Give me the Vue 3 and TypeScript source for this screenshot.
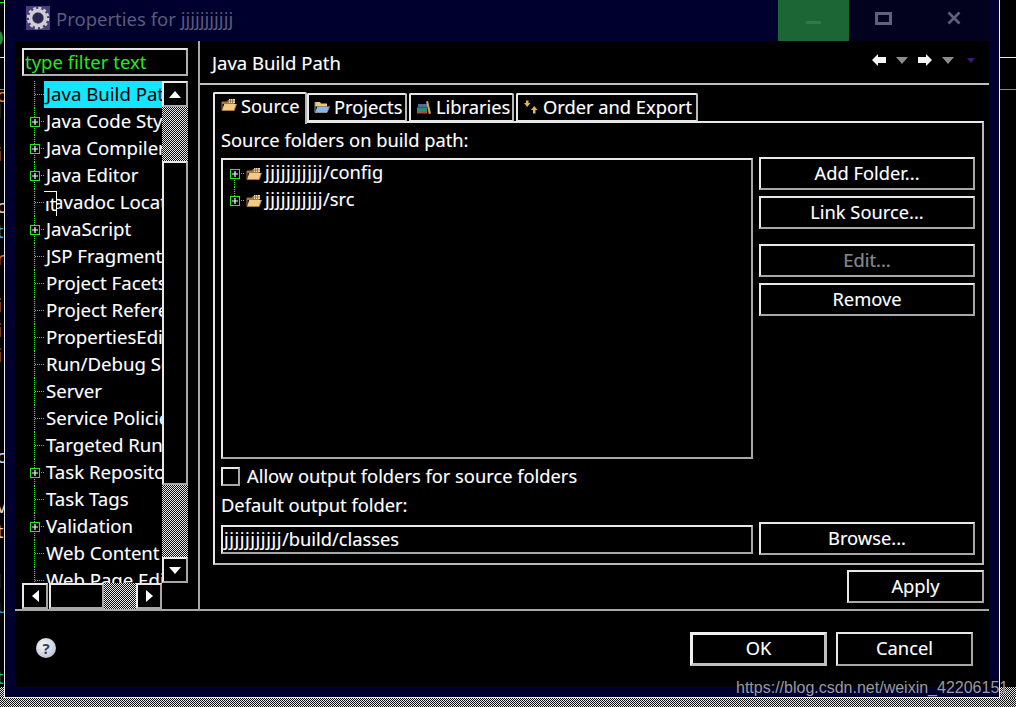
<script setup lang="ts">
interface TreeRow { label: string; plus: boolean; sel?: boolean; covered?: boolean }
const rows: TreeRow[] = [
  { label: 'Java Build Path', plus: false, sel: true },
  { label: 'Java Code Style', plus: true },
  { label: 'Java Compiler', plus: true },
  { label: 'Java Editor', plus: true },
  { label: 'Javadoc Location', plus: false, covered: true },
  { label: 'JavaScript', plus: true },
  { label: 'JSP Fragment', plus: false },
  { label: 'Project Facets', plus: false },
  { label: 'Project References', plus: false },
  { label: 'PropertiesEditor', plus: false },
  { label: 'Run/Debug Settings', plus: false },
  { label: 'Server', plus: false },
  { label: 'Service Policies', plus: false },
  { label: 'Targeted Runtimes', plus: false },
  { label: 'Task Repository', plus: true },
  { label: 'Task Tags', plus: false },
  { label: 'Validation', plus: true },
  { label: 'Web Content Settings', plus: false },
  { label: 'Web Page Editor', plus: false },
]
const fragments = [
  { top: 84, c: '#e08a2a', t: 'o' }, { top: 100, c: '#3aa0ff', t: 'l' }, { top: 143, c: '#cfe4ff', t: 'i' },
  { top: 195, c: '#e6d0b0', t: 'c' }, { top: 220, c: '#4aa8ff', t: 't' }, { top: 247, c: '#d07a20', t: 'r' },
  { top: 294, c: '#e8e8e8', t: 'i' }, { top: 319, c: '#e8e8e8', t: 'i' }, { top: 344, c: '#e8e8e8', t: 'i' },
  { top: 445, c: '#bcd8ff', t: 'c' }, { top: 495, c: '#e8d8c0', t: 'v' }, { top: 520, c: '#e8d0a8', t: 't' },
  { top: 570, c: '#2a90e0', t: 'l' }, { top: 595, c: '#2a90e0', t: 'u' }, { top: 666, c: '#20c0a0', t: 't' },
]
</script>

<template>
  <div class="screen">
    <svg class="defs" width="0" height="0" aria-hidden="true">
      <symbol id="src" viewBox="0 0 16 14">
        <path d="M1 3.5h5l1-1.5h6.5v4H1z" fill="#a9793a" />
        <path d="M8 1h6v4H8z" fill="#f3dca8" />
        <path d="M9.5 1v4M11.5 1v4M8 3h6" stroke="#8a6a3a" stroke-width=".8" />
        <path d="M1 12.5 3.2 6H15.5l-2.3 6.5z" fill="#f2c987" />
        <path d="M1 12.5V4M1 12.5h12.2l2.3-6.5" fill="none" stroke="#a9793a" stroke-width="1" />
      </symbol>
      <symbol id="prj" viewBox="0 0 16 14">
        <path d="M1 2h5l1 1.5h6v3H1z" fill="#e9c877" />
        <path d="M1 12.5 3.4 6.5H15.5l-2.6 6z" fill="#8fb4e6" />
        <path d="M1 12.5V2.500M1 12.5h12l2.500-6" fill="none" stroke="#8a8f9c" stroke-width="1" />
      </symbol>
      <symbol id="lib" viewBox="0 0 16 14">
        <path d="M1 11h10v2.500H1z" fill="#c0453a" />
        <path d="M1 7.500h10V11H1z" fill="#2f8a78" />
        <path d="M2 4h9v3.500H2z" fill="#4c6f9c" />
        <path d="M10 1.500 12 1l3 12.500-2.200.5z" fill="#d9a441" />
      </symbol>
      <symbol id="ord" viewBox="0 0 16 14">
        <path d="M1 3h2V0.500h2.500V3h2L4.250 7z" fill="#e6b450" />
        <path d="M8 10h2v3.500h2.500V10h2l-3.250-4z" fill="#e6b450" />
      </symbol>
      <symbol id="plus" viewBox="0 0 10 10">
        <rect x=".5" y=".5" width="9" height="9" fill="#000" stroke="#2ae82a" />
        <path d="M2 5h6M5 2v6" stroke="#fff" stroke-width="1.200" />
      </symbol>
    </svg>

    <div class="strip strip-left">
      <div class="strip-fill">
        <span class="dash green" />
        <span class="blob" />
        <span class="hline first" />
        <span class="hline second" />
        <span v-for="f in fragments" :key="f.top" class="frag" :style="{ top: f.top + 'px', color: f.c }">{{ f.t }}</span>
      </div>
      <div class="checker tail" />
    </div>

    <div class="window">
      <header class="titlebar">
        <svg class="gear" width="24" height="24" viewBox="0 0 24 24">
          <rect width="24" height="24" fill="#4a3d7e" />
          <g fill="none" stroke="#cfcfcf">
            <circle cx="12" cy="12" r="7.500" stroke-width="3.500" />
            <circle cx="12" cy="12" r="10" stroke-width="2.500" stroke-dasharray="3 2.240" />
          </g>
          <circle cx="12" cy="12" r="5" fill="#26264e" />
        </svg>
        <span class="title">Properties for jjjjjjjjjjj</span>
        <span class="grow" />
        <div class="wbtn min"><span class="bar" /></div>
        <div class="wbtn"><span class="square" /></div>
        <div class="wbtn">
          <svg class="xicon" width="14" height="14" viewBox="0 0 14 14"><path d="M1.500 1.500l11 11M12.500 1.500l-11 11" stroke="#5f5f7e" stroke-width="2.600" /></svg>
        </div>
        <span class="edge" />
      </header>

      <div class="body">
        <div class="main">
          <aside class="side">
            <div class="filter">type filter text</div>
            <div class="pane">
              <div class="tree">
                <div v-for="r in rows" :key="r.label" class="row">
                  <svg class="gut" width="22" height="27" viewBox="0 0 22 27">
                    <path d="M12.500 0v27M13 13.500h9" stroke="#2ae82a" stroke-dasharray="1 1" fill="none" />
                    <use v-if="r.plus" href="#plus" x="8" y="9" width="10" height="10" />
                  </svg>
                  <span class="rlabel" :class="{ sel: r.sel, covered: r.covered }">{{ r.label }}</span>
                </div>
                <span class="ghost">ıt</span>
              </div>
              <div class="vbar">
                <div class="sbtn raised"><i class="tri up" /></div>
                <div class="checker vtop" />
                <div class="vthumb raised" />
                <div class="checker vbot" />
                <div class="sbtn raised"><i class="tri down" /></div>
              </div>
              <div class="hbar">
                <div class="sbtn raised"><i class="tri left" /></div>
                <div class="hthumb raised" />
                <div class="checker htrack" />
                <div class="sbtn raised"><i class="tri right" /></div>
              </div>
              <div class="corner" />
            </div>
          </aside>

          <section class="content">
            <div class="head">
              <span class="head-title">Java Build Path</span>
              <div class="nav">
                <svg width="14" height="12" viewBox="0 0 14 12"><path d="M0 6l6-6v3h8v6H6v3z" fill="#f4f4f4" /></svg>
                <i class="dd" />
                <svg class="nav-fwd" width="14" height="12" viewBox="0 0 14 12"><path d="M14 6L8 0v3H0v6h8v3z" fill="#f4f4f4" /></svg>
                <i class="dd" />
                <i class="dd small" />
              </div>
            </div>

            <div class="tabs">
              <div class="tab active"><svg width="16" height="14"><use href="#src" /></svg>Source</div>
              <div class="tab t-prj"><svg width="16" height="14"><use href="#prj" /></svg>Projects</div>
              <div class="tab t-lib"><svg width="16" height="14"><use href="#lib" /></svg>Libraries</div>
              <div class="tab t-ord"><svg width="16" height="14"><use href="#ord" /></svg>Order and Export</div>
            </div>

            <div class="panel">
              <div class="lbl first-lbl">Source folders on build path:</div>
              <div class="src-row">
                <div class="srcbox">
                  <div class="srow">
                    <svg class="sgut" width="15" height="27" viewBox="0 0 15 27">
                      <path d="M5.500 14v13" stroke="#2ae82a" stroke-dasharray="1 1" fill="none" />
                      <path d="M10 13.500h5" stroke="#2ae82a" stroke-dasharray="1 1" fill="none" />
                      <use href="#plus" x="1" y="9" width="10" height="10" />
                    </svg>
                    <svg class="fold" width="16" height="14"><use href="#src" /></svg>
                    <span class="stext"><span class="jj">jjjjjjjjjjj</span>/config</span>
                  </div>
                  <div class="srow">
                    <svg class="sgut" width="15" height="27" viewBox="0 0 15 27">
                      <path d="M5.500 0v9" stroke="#2ae82a" stroke-dasharray="1 1" fill="none" />
                      <path d="M10 13.500h5" stroke="#2ae82a" stroke-dasharray="1 1" fill="none" />
                      <use href="#plus" x="1" y="9" width="10" height="10" />
                    </svg>
                    <svg class="fold" width="16" height="14"><use href="#src" /></svg>
                    <span class="stext"><span class="jj">jjjjjjjjjjj</span>/src</span>
                  </div>
                </div>
                <div class="btncol">
                  <button class="btn raised">Add Folder...</button>
                  <button class="btn raised">Link Source...</button>
                  <button class="btn raised disabled spaced">Edit...</button>
                  <button class="btn raised">Remove</button>
                </div>
              </div>
              <div class="check-row">
                <span class="check" />
                <span class="check-text">Allow output folders for source folders</span>
              </div>
              <div class="lbl out-lbl">Default output folder:</div>
              <div class="out-row">
                <div class="outinput"><span class="jj">jjjjjjjjjjj</span>/build/classes</div>
                <button class="btn raised browse">Browse...</button>
              </div>
            </div>

            <div class="apply-row"><button class="btn raised apply">Apply</button></div>
          </section>
        </div>

        <footer class="footer">
          <span class="help">?</span>
          <span class="grow" />
          <button class="btn raised dlg ok">OK</button>
          <button class="btn raised dlg">Cancel</button>
        </footer>
      </div>
    </div>

    <div class="strip strip-right">
      <div class="strip-fill">
        <span class="hline first" />
        <span class="hline second" />
      </div>
      <div class="checker tail" />
    </div>

    <div class="checker bottom" />
    <span class="mark">https://blog.csdn.net/weixin_42206151</span>
  </div>
</template>

<style>
html, body { margin: 0; background: #000; }
</style>

<style scoped>
.screen {
  position: relative;
  width: 1016px;
  height: 707px;
  overflow: hidden;
  display: grid;
  grid-template-columns: 4px 996px 16px;
  grid-template-rows: 698px 9px;
  background: #000;
  color: #fff;
  font-family: "Noto Sans", "Open Sans", sans-serif;
  font-size: 18.300px;
  text-shadow: -0.4px 0 rgba(70, 150, 255, .3), 0.4px 0 rgba(255, 170, 70, .25);
}
.defs { position: absolute; }
.grow { flex: 1; }
.jj { letter-spacing: .55px; }
.checker {
  background: repeating-conic-gradient(#e8e8e8 0 25%, #111 0 50%) 0 0 / 2px 2px;
}
.bottom { grid-column: 1 / 4; }

.strip { display: flex; flex-direction: column; overflow: hidden; }
.strip-fill { position: relative; flex: 1; overflow: hidden; }
.tail { height: 11px; }
.hline { position: absolute; left: 0; right: 0; height: 1px; }
.hline.first { top: 57px; background: #e8e8e0; }
.hline.second { top: 89px; background: #8a8a8a; }
.dash { position: absolute; top: 2px; left: 0; width: 4px; height: 1px; }
.dash.green { background: #2ae82a; }
.blob { position: absolute; top: 31px; left: -5px; width: 8px; height: 14px; border-radius: 50%; background: #2a8a3a; }
.frag { position: absolute; left: -3px; font-size: 18px; line-height: 22px; text-shadow: none; }

.window {
  box-sizing: border-box;
  display: flex;
  flex-direction: column;
  background: #00002e;
  border: 1px solid #f0f0f0;
  border-top: 0;
}
.titlebar { height: 41px; display: flex; align-items: center; flex: none; }
.gear { margin-left: 21px; margin-top: -5px; flex: none; }
.title { margin-left: 6px; margin-top: -5px; color: #5b5b7b; font-size: 18.500px; text-shadow: none; }
.wbtn { width: 70px; height: 41px; display: flex; align-items: center; justify-content: center; background: #02021f; }
.wbtn.min { width: 71px; background: #1c6636; }
.bar { width: 15px; height: 3px; margin-top: 3px; background: #2f7a4a; }
.square { box-sizing: border-box; width: 17px; height: 13px; border: 3px solid #5f5f7e; margin-top: -5px; margin-left: -2px; }
.xicon { margin-top: -5px; }
.edge { width: 10px; }

.body { flex: 1; margin: 0 10px 10px; background: #000; display: flex; flex-direction: column; }
.main { height: 568px; display: flex; border-bottom: 2px solid #a8a8a8; flex: none; }

.side { width: 176px; padding-left: 7px; border-right: 2px solid #a8a8a8; flex: none; }
.filter {
  box-sizing: border-box;
  width: 166px;
  height: 28px;
  margin-top: 7px;
  padding-left: 1px;
  border: 2px solid #e4e4e4;
  border-right-color: #b0b0b0;
  border-bottom-color: #b0b0b0;
  color: #22e822;
  line-height: 24px;
  font-size: 18.500px;
  white-space: nowrap;
  text-shadow: none;
}
.pane { margin-top: 5px; display: grid; grid-template-columns: 140px 26px; grid-template-rows: 502px 26px; }
.tree { position: relative; overflow: hidden; }
.row { height: 27px; display: flex; align-items: center; white-space: nowrap; }
.gut { flex: none; }
.rlabel { flex: 1; height: 27px; line-height: 26px; padding-left: 2px; overflow: hidden; font-size: 18.600px; }
.rlabel.sel { background: #14e6ff; color: #000; text-shadow: none; }
.rlabel.covered { padding-left: 4px; }
.ghost {
  position: absolute;
  left: 22px;
  top: 110px;
  box-sizing: border-box;
  width: 13px;
  height: 25px;
  padding-left: 1px;
  background: #000;
  border-top: 1px solid #fff;
  border-right: 1px solid #fff;
  line-height: 24px;
  overflow: hidden;
}
.raised, .srcbox, .outinput, .check {
  border: 2px solid #e8e8e8;
  border-right-color: #a8a8a8;
  border-bottom-color: #a8a8a8;
  box-sizing: border-box;
}
.vbar { display: flex; flex-direction: column; }
.sbtn { width: 26px; height: 26px; display: flex; align-items: center; justify-content: center; background: #000; flex: none; }
.vtop { height: 54px; }
.vthumb { height: 324px; }
.vbot { height: 72px; }
.hbar { display: flex; }
.hthumb { width: 55px; margin-left: 1px; }
.htrack { width: 32px; }
.tri { width: 0; height: 0; display: block; border-style: solid; border-color: transparent; }
.tri.up { border-width: 0 6px 7px; border-bottom-color: #fff; }
.tri.down { border-width: 7px 6px 0; border-top-color: #fff; }
.tri.left { border-width: 6px 7px 6px 0; border-right-color: #fff; }
.tri.right { border-width: 6px 0 6px 7px; border-left-color: #fff; }

.content { flex: 1; min-width: 0; }
.head { height: 44px; display: flex; align-items: center; justify-content: space-between; border-bottom: 2px solid #c0c0c0; box-sizing: border-box; padding: 0 14px 0 12px; }
.head-title { font-size: 18.500px; }
.nav { display: flex; align-items: center; margin-top: -5px; }
.dd { width: 0; height: 0; border-style: solid; border-color: transparent; border-width: 7px 6px 0; border-top-color: #8c8c8c; margin-left: 10px; margin-top: 1px; }
.nav-fwd { margin-left: 10px; }
.dd.small { border-width: 5px 4px 0; border-top-color: #3a1a7a; margin-left: 13px; }

.tabs { display: flex; align-items: flex-end; height: 31px; margin: 6px 0 0 13px; position: relative; z-index: 1; }
.tab {
  box-sizing: border-box;
  height: 29px;
  display: flex;
  align-items: center;
  gap: 4px;
  padding-left: 5px;
  padding-bottom: 2px;
  margin-right: 2px;
  border: 2px solid #e8e8e8;
  border-right-color: #b8b8b8;
  border-bottom: 2px solid #e8e8e8;
  border-radius: 2px 2px 0 0;
  white-space: nowrap;
  background: #000;
  margin-bottom: 0;
}
.tab.active { height: 32px; width: 94px; margin-right: 0; border-bottom: 0; padding-left: 6px; padding-bottom: 8px; margin-bottom: -2px; }
.t-prj { width: 100px; }
.t-lib { width: 105px; }
.t-ord { width: 182px; }

.panel {
  box-sizing: border-box;
  width: 771px;
  height: 444px;
  margin-left: 13px;
  margin-top: -1px;
  padding: 0 0 0 6px;
  border: 2px solid #e8e8e8;
  border-right-color: #b8b8b8;
  border-bottom-color: #b8b8b8;
}
.lbl { white-space: nowrap; }
.first-lbl { height: 34px; line-height: 34px; }
.src-row { display: flex; gap: 6px; }
.srcbox { width: 532px; height: 301px; margin-top: 1px; padding-top: 0; flex: none; }
.srow { height: 27px; display: flex; align-items: center; padding-left: 6px; white-space: nowrap; }
.sgut { flex: none; }
.stext { margin-top: -4px; }
.fold { margin: 0 3px 0 2px; flex: none; }
.btncol { display: flex; flex-direction: column; gap: 6px; }
.btn {
  width: 216px;
  height: 33px;
  padding: 0 0 2px;
  background: #000;
  color: #fff;
  font: inherit;
  text-shadow: inherit;
  display: flex;
  align-items: center;
  justify-content: center;
}
.spaced { margin-top: 9px; }
.disabled { color: #858585; }
.check-row { display: flex; align-items: center; gap: 7px; height: 18px; margin-top: 8px; white-space: nowrap; }
.check { width: 19px; height: 19px; }
.check-text { margin-top: -2px; }
.out-lbl { height: 20px; line-height: 20px; margin-top: 10px; }
.out-row { display: flex; gap: 6px; margin-top: 7px; }
.outinput { width: 532px; height: 29px; margin-top: 3px; line-height: 23px; white-space: nowrap; padding-left: 1px; flex: none; }

.apply-row { display: flex; justify-content: flex-end; margin-top: 5px; padding-right: 5px; }
.btn.apply { width: 137px; }

.footer { flex: 1; display: flex; padding: 21px 16px 0 21px; gap: 9px; align-items: flex-start; }
.help {
  width: 20px;
  height: 20px;
  margin-top: 6px;
  border-radius: 50%;
  background: radial-gradient(circle at 40% 35%, #f4f6fa, #aeb6c8);
  color: #33406a;
  font-size: 15px;
  font-weight: 700;
  line-height: 20px;
  text-align: center;
  text-shadow: none;
}
.btn.dlg { width: 137px; height: 34px; padding-bottom: 4px; }
.btn.ok { border-width: 3px; border-color: #f0f0f0; border-right-color: #c0c0c0; border-bottom-color: #c0c0c0; }

.mark {
  position: absolute;
  left: 736px;
  top: 679px;
  font-family: "Liberation Sans", Arial, sans-serif;
  font-size: 16px;
  line-height: 18px;
  color: #9a9a9a;
  text-shadow: none;
  white-space: nowrap;
}
</style>
